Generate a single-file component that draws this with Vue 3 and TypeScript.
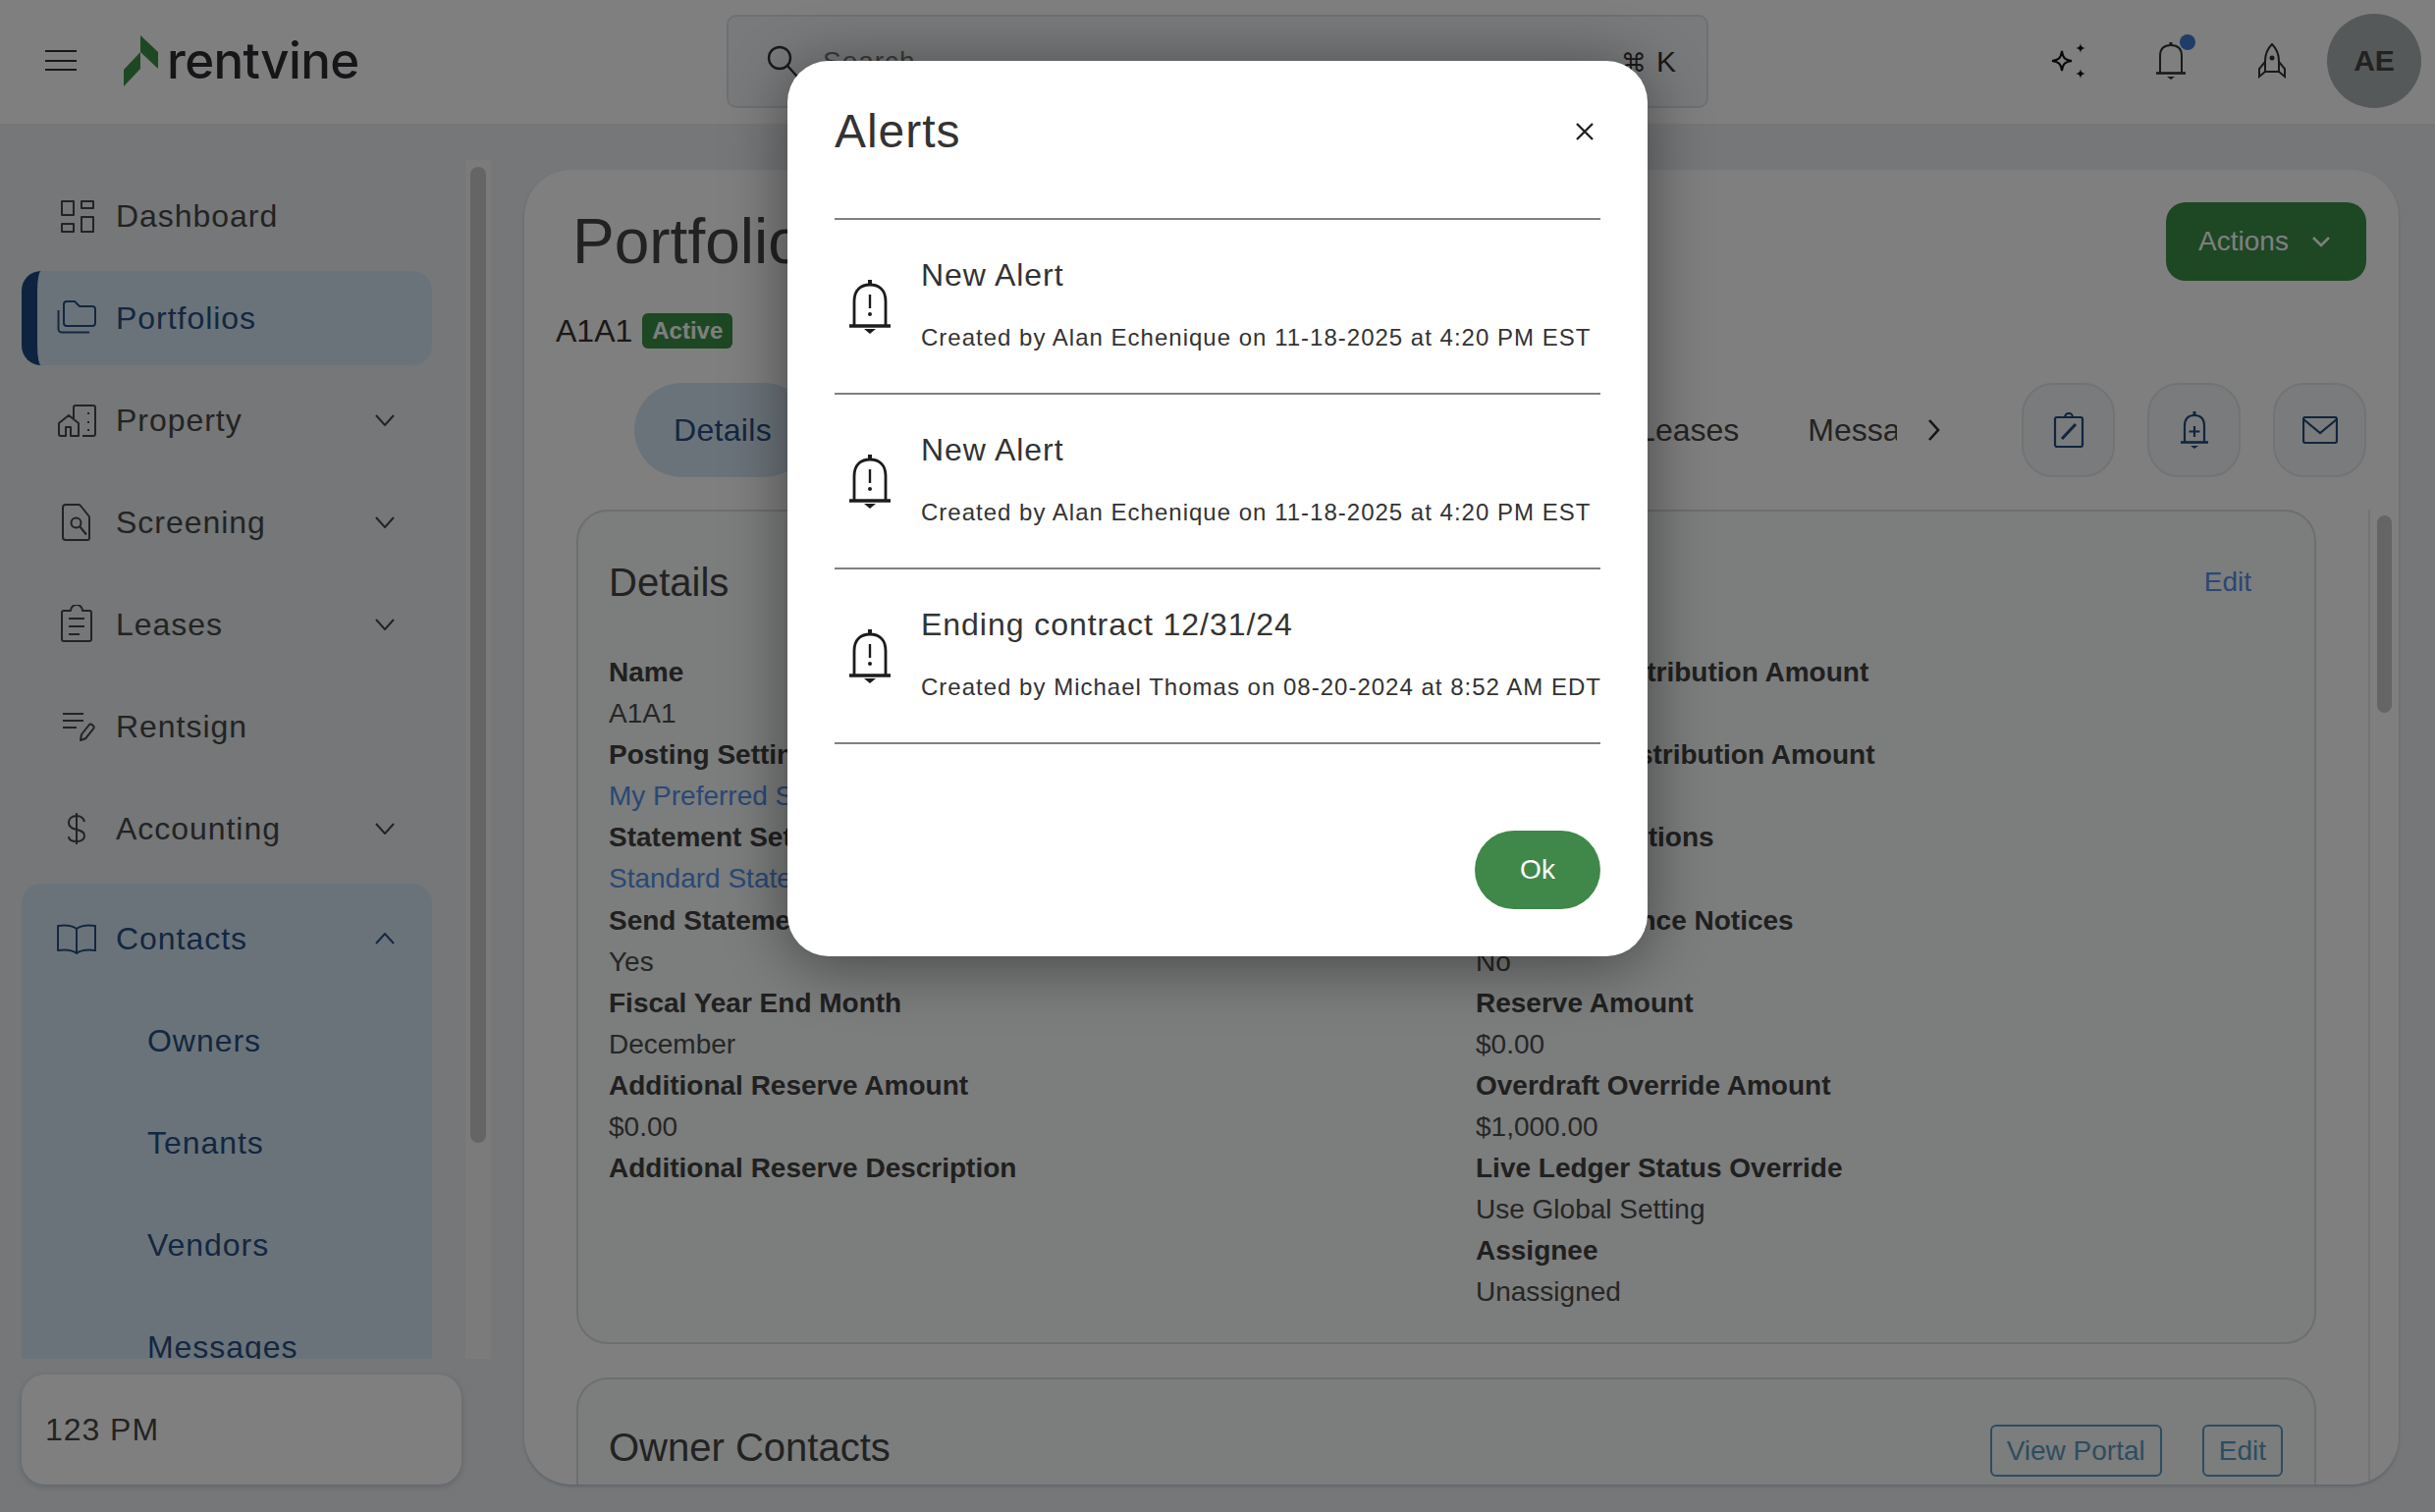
<script setup lang="ts">
interface NavItem {
  label: string;
  paths: string[];
  chevron?: boolean;
  active?: boolean;
}

interface DetailRow {
  label: string;
  value: string;
  link?: boolean;
}

const navItems: NavItem[] = [
  {
    label: "Dashboard",
    paths: ["M5 5h12v14H5z", "M25 5h12v7H25z", "M5 28h12v8H5z", "M25 21h12v15H25z"],
  },
  {
    label: "Portfolios",
    active: true,
    paths: [
      "M7 6a3 3 0 0 1 3-3h8l5 5h13a3 3 0 0 1 3 3v14a3 3 0 0 1-3 3H10a3 3 0 0 1-3-3z",
      "M1.5 12v19a3.5 3.5 0 0 0 3.5 3.5h28",
    ],
  },
  {
    label: "Property",
    chevron: true,
    paths: [
      "M2 34V23l10-8 10 8v13h-8v-9H9v9H4a2 2 0 0 1-2-2z",
      "M17 18V7a2 2 0 0 1 2-2h18a2 2 0 0 1 2 2v27a2 2 0 0 1-2 2H26",
      "M32 12v2M32 21v2M32 29v2",
    ],
  },
  {
    label: "Screening",
    chevron: true,
    paths: [
      "M9 2h13a3 3 0 0 1 2 1l8 10a3 3 0 0 1 1 2v21a2 2 0 0 1-2 2H9a3 3 0 0 1-3-3V5a3 3 0 0 1 3-3z",
      "M24.5 20.5a5 5 0 1 1-10 0a5 5 0 1 1 10 0z",
      "M23.5 24.5l6.5 8",
    ],
  },
  {
    label: "Leases",
    chevron: true,
    paths: [
      "M7 6h7a6 6 0 0 1 12 0h7a2 2 0 0 1 2 2v27a2 2 0 0 1-2 2H7a2 2 0 0 1-2-2V8a2 2 0 0 1 2-2z",
      "M12 14h16M12 22h16M12 30h11",
    ],
  },
  {
    label: "Rentsign",
    paths: ["M6 7h21M6 14h21M6 21h14", "M24 34l1-6 8-10a2 2 0 0 1 3 .5l1 .8a2 2 0 0 1 0 3l-8 10z"],
  },
  {
    label: "Accounting",
    chevron: true,
    paths: ["M28 13c-1-4-4-6-8-6-5 0-8 3-8 7 0 9 16 5 16 13 0 4-3 6-8 6s-8-2-8-5", "M20 4v32"],
  },
];

const contactLinks = ["Owners", "Tenants", "Vendors", "Messages"];

const tabs = ["Properties", "Units", "Transactions", "Contacts", "Leases", "Messages"];

const leftRows: DetailRow[] = [
  { label: "Name", value: "A1A1" },
  { label: "Posting Settings", value: "My Preferred Settings", link: true },
  { label: "Statement Settings", value: "Standard Statement", link: true },
  { label: "Send Statements", value: "Yes" },
  { label: "Fiscal Year End Month", value: "December" },
  { label: "Additional Reserve Amount", value: "$0.00" },
  { label: "Additional Reserve Description", value: "" },
];

const rightRows: DetailRow[] = [
  { label: "Minimum Distribution Amount", value: "$0.00" },
  { label: "Maximum Distribution Amount", value: "$0.00" },
  { label: "Hold Distributions", value: "No" },
  { label: "Email Insurance Notices", value: "No" },
  { label: "Reserve Amount", value: "$0.00" },
  { label: "Overdraft Override Amount", value: "$1,000.00" },
  { label: "Live Ledger Status Override", value: "Use Global Setting" },
  { label: "Assignee", value: "Unassigned" },
];

const alerts = [
  { title: "New Alert", meta: "Created by Alan Echenique on 11-18-2025 at 4:20 PM EST" },
  { title: "New Alert", meta: "Created by Alan Echenique on 11-18-2025 at 4:20 PM EST" },
  { title: "Ending contract 12/31/24", meta: "Created by Michael Thomas on 08-20-2024 at 8:52 AM EDT" },
];
</script>

<template>
  <div class="page">
    <header class="topbar">
      <div class="burger"><span></span><span></span><span></span></div>
      <div class="logo">
        <svg class="logo__mark" width="36" height="52" viewBox="0 0 36 52">
          <path d="M17 0l18 17v17L17 17z" fill="#3d8f48" />
          <path d="M0 35l17-18v17L0 52z" fill="#3d8f48" />
        </svg>
        <span class="logo__text">rentvine</span>
      </div>
      <div class="search">
        <svg width="34" height="34" viewBox="0 0 34 34" fill="none" stroke="#333" stroke-width="2.4">
          <circle cx="14" cy="13" r="11" />
          <path d="M22 21l10 11" stroke-linecap="round" />
        </svg>
        <span class="search__text">Search</span>
        <span class="search__keys"><span class="search__cmd">⌘</span> K</span>
      </div>
      <div class="topbar__icons">
        <svg width="38" height="38" viewBox="0 0 38 38" fill="none" stroke="#111" stroke-width="2">
          <path d="M12 9c1 7 3 9 10 10-7 1-9 3-10 10-1-7-3-9-10-10 7-1 9-3 10-10z" />
          <path d="M31 1c.6 3.400 1.600 4.400 5 5-3.400.6-4.400 1.600-5 5-.6-3.400-1.600-4.400-5-5 3.400-.6 4.400-1.600 5-5z" fill="#111" stroke="none" />
          <path d="M31 27c.6 3.400 1.600 4.400 5 5-3.400.6-4.400 1.600-5 5-.6-3.400-1.600-4.400-5-5 3.400-.6 4.400-1.600 5-5z" fill="#111" stroke="none" />
        </svg>
        <div class="notif">
          <svg width="30" height="38" viewBox="0 0 30 38" fill="none" stroke="#333" stroke-width="2">
            <path d="M4 31V14C4 6 9 3 15 3s11 3 11 11v17" />
            <path d="M0 31.500h30" stroke-width="2.600" />
            <path d="M15 0v3" stroke-width="3" />
            <path d="M11 35h8l-4 3z" fill="#333" stroke="none" />
          </svg>
          <span class="notif__dot"></span>
        </div>
        <svg class="rocket" width="30" height="36" viewBox="0 0 30 36" fill="none" stroke="#333" stroke-width="2">
          <path d="M15 1c5 5 7 11 7 17v11H8V18C8 12 10 6 15 1z" />
          <path d="M8 19l-6 7v8l6-5M22 19l6 7v8l-6-5" />
          <circle cx="15" cy="15" r="2.500" fill="#333" stroke="none" />
        </svg>
        <div class="avatar">AE</div>
      </div>
    </header>

    <div class="body">
      <aside class="sidebar">
        <div class="sidebar__scroll">
          <nav class="nav">
            <div
              v-for="item in navItems"
              :key="item.label"
              class="nav__item"
              :class="{ 'nav__item--active': item.active }"
            >
              <svg class="nav__icon" width="40" height="40" viewBox="0 0 40 40" fill="none" stroke="currentColor" stroke-width="2">
                <path v-for="d in item.paths" :key="d" :d="d" stroke-linejoin="round" />
              </svg>
              <span class="nav__label">{{ item.label }}</span>
              <svg v-if="item.chevron" class="nav__chev" width="20" height="12" viewBox="0 0 20 12" fill="none" stroke="currentColor" stroke-width="2">
                <path d="M1 1l9 10 9-10" />
              </svg>
            </div>
            <div class="nav__group">
              <div class="nav__item nav__item--open">
                <svg class="nav__icon" width="40" height="40" viewBox="0 0 40 40" fill="none" stroke="currentColor" stroke-width="2">
                  <path d="M20 10C16 7 8 6 1 7v25c7-1 15 0 19 3 4-3 12-4 19-3V7c-7-1-15 0-19 3zM20 10v25" stroke-linejoin="round" />
                </svg>
                <span class="nav__label">Contacts</span>
                <svg class="nav__chev" width="20" height="12" viewBox="0 0 20 12" fill="none" stroke="currentColor" stroke-width="2">
                  <path d="M1 11l9-10 9 10" />
                </svg>
              </div>
              <div v-for="link in contactLinks" :key="link" class="nav__sub">{{ link }}</div>
            </div>
          </nav>
          <div class="sidebar__track"><div class="sidebar__thumb"></div></div>
        </div>
        <div class="account">123 PM</div>
      </aside>

      <main class="main">
        <div class="main__head">
          <div class="main__top">
            <h1 class="main__title">Portfolios</h1>
            <button class="btn-actions">
              Actions
              <svg width="20" height="12" viewBox="0 0 20 12" fill="none" stroke="currentColor" stroke-width="2.600">
                <path d="M2 2l8 8 8-8" />
              </svg>
            </button>
          </div>
          <div class="main__sub">
            <span class="main__code">A1A1</span>
            <span class="badge">Active</span>
          </div>
          <div class="tabbar">
            <div class="tabs">
              <div class="tab tab--active">Details</div>
              <div v-for="tab in tabs" :key="tab" class="tab">{{ tab }}</div>
            </div>
            <svg class="tabbar__next" width="14" height="24" viewBox="0 0 14 24" fill="none" stroke="#2a2a2a" stroke-width="2.600">
              <path d="M2 2l9 10-9 10" />
            </svg>
            <div class="tool-btn">
              <svg width="32" height="36" viewBox="0 0 32 36" fill="none" stroke="currentColor" stroke-width="2.200">
                <path d="M4 5h24a2 2 0 0 1 2 2v26a2 2 0 0 1-2 2H4a2 2 0 0 1-2-2V7a2 2 0 0 1 2-2z" />
                <path d="M12 5a4 4 0 0 1 8 0" />
                <path d="M9 27L23 12" stroke-width="3" />
              </svg>
            </div>
            <div class="tool-btn">
              <svg width="30" height="38" viewBox="0 0 30 38" fill="none" stroke="currentColor" stroke-width="2.200">
                <path d="M5 31V15C5 7 9 4 15 4s10 3 10 11v16" />
                <path d="M1 31.500h28" stroke-width="2.600" />
                <path d="M15 0v4" stroke-width="3" />
                <path d="M15 15v11M9.500 20.500h11" />
                <path d="M11 35h8l-4 3z" fill="currentColor" stroke="none" />
              </svg>
            </div>
            <div class="tool-btn">
              <svg width="36" height="28" viewBox="0 0 36 28" fill="none" stroke="currentColor" stroke-width="2.200">
                <rect x="1" y="1" width="34" height="26" rx="2" />
                <path d="M1 3l17 14L35 3" />
              </svg>
            </div>
          </div>
        </div>

        <div class="main__scroll">
          <div class="main__content">
            <section class="panel">
              <div class="panel__head">
                <h2 class="panel__title">Details</h2>
                <span class="panel__link">Edit</span>
              </div>
              <div class="fields">
                <div class="fields__col">
                  <template v-for="row in leftRows" :key="row.label">
                    <div class="fields__label">{{ row.label }}</div>
                    <div v-if="row.value" class="fields__value" :class="{ 'fields__value--link': row.link }">{{ row.value }}</div>
                  </template>
                </div>
                <div class="fields__col">
                  <template v-for="row in rightRows" :key="row.label">
                    <div class="fields__label">{{ row.label }}</div>
                    <div class="fields__value">{{ row.value }}</div>
                  </template>
                </div>
              </div>
            </section>
            <section class="panel panel--contacts">
              <div class="panel__head panel__head--contacts">
                <h2 class="panel__title">Owner Contacts</h2>
                <div class="panel__btns">
                  <button class="btn-outline">View Portal</button>
                  <button class="btn-outline">Edit</button>
                </div>
              </div>
            </section>
          </div>
          <div class="main__track"><div class="main__thumb"></div></div>
        </div>
      </main>
    </div>

    <div class="overlay">
      <div class="modal">
        <div class="modal__head">
          <h3 class="modal__title">Alerts</h3>
          <svg class="modal__close" width="20" height="20" viewBox="0 0 20 20" fill="none" stroke="#222" stroke-width="2.400">
            <path d="M2 2l16 16M18 2L2 18" />
          </svg>
        </div>
        <div class="alerts">
          <div v-for="(alert, i) in alerts" :key="i" class="alert">
            <svg class="alert__icon" width="42" height="55" viewBox="0 0 42 55" fill="none" stroke="#1c1c1c" stroke-width="2.800">
              <path d="M5 46V22C5 10 12 5 21 5s16 5 16 17v24" />
              <path d="M0 47h42" stroke-width="3.600" />
              <path d="M21 0v6" stroke-width="4" />
              <path d="M21 15v14" stroke-width="2.400" />
              <circle cx="21" cy="35" r="2" fill="#1c1c1c" stroke="none" />
              <path d="M15 50h12l-6 5z" fill="#1c1c1c" stroke="none" />
            </svg>
            <div class="alert__text">
              <div class="alert__title">{{ alert.title }}</div>
              <div class="alert__meta">{{ alert.meta }}</div>
            </div>
          </div>
        </div>
        <div class="modal__foot">
          <button class="btn-ok">Ok</button>
        </div>
      </div>
    </div>
  </div>
</template>

<style>
html,
body {
  margin: 0;
  background: #eaeef2;
}
</style>

<style scoped>
.page {
  position: relative;
  width: 2480px;
  height: 1540px;
  overflow: hidden;
  display: flex;
  flex-direction: column;
  background: #eaeef2;
  color: #474747;
  font-family: "Liberation Sans", Arial, sans-serif;
  font-size: 32px;
  letter-spacing: 0.03em;
}

button {
  font-family: inherit;
  letter-spacing: inherit;
  cursor: pointer;
}

h1,
h2,
h3 {
  margin: 0;
  font-weight: 400;
}

/* top bar */
.topbar {
  flex: 0 0 126px;
  display: flex;
  align-items: center;
  background: #fff;
  padding: 0 14px 0 46px;
  box-sizing: border-box;
}

.burger {
  width: 32px;
  height: 21px;
  margin-top: -3px;
  display: flex;
  flex-direction: column;
  justify-content: space-between;
}

.burger span {
  height: 2px;
  background: #333;
}

.logo {
  flex: none;
  display: flex;
  align-items: center;
  gap: 8px;
  margin: -3px 0 0 48px;
  width: 236px;
}

.logo__mark {
  flex: none;
}

.logo__text {
  flex: none;
  font-family: Inter, sans-serif;
  font-size: 51px;
  font-weight: 500;
  letter-spacing: -0.012em;
  color: #2c2d30;
  line-height: 60px;
}

.search {
  flex: none;
  width: 1000px;
  height: 95px;
  margin: -1px 0 0 378px;
  box-sizing: border-box;
  display: flex;
  align-items: center;
  padding: 0 30px 0 38px;
  background: #f3f5f7;
  border: 2px solid #dde1e6;
  border-radius: 10px;
  color: #555;
}

.search__text {
  margin-left: 24px;
  color: #777;
  font-size: 28px;
  flex: 1;
}

.search__keys {
  color: #333;
  font-size: 30px;
}

.search__cmd {
  font-family: "DejaVu Sans", sans-serif;
  font-size: 26px;
}

.topbar__icons {
  margin: -2px 0 0 auto;
  display: flex;
  align-items: center;
  gap: 70px;
}

.notif {
  position: relative;
  display: flex;
}

.notif__dot {
  position: absolute;
  top: -8px;
  right: -10px;
  width: 16px;
  height: 16px;
  border-radius: 50%;
  background: #3e7bd0;
}

.rocket {
  margin-left: 3px;
}

.avatar {
  width: 96px;
  height: 96px;
  margin-left: -29px;
  border-radius: 50%;
  background: #acb2b2;
  display: flex;
  align-items: center;
  justify-content: center;
  font-weight: 700;
  font-size: 30px;
  letter-spacing: 0;
  color: #444;
}

/* body */
.body {
  flex: 1;
  min-height: 0;
  display: flex;
}

.sidebar {
  flex: 0 0 534px;
  box-sizing: border-box;
  padding: 37px 0 28px 22px;
  display: flex;
  flex-direction: column;
  gap: 16px;
}

.sidebar__scroll {
  flex: 1;
  min-height: 0;
  display: flex;
  overflow: hidden;
}

.nav {
  width: 418px;
  overflow: hidden;
  padding-top: 9px;
  box-sizing: border-box;
  display: flex;
  flex-direction: column;
  gap: 8px;
}

.nav__item {
  flex: 0 0 96px;
  display: flex;
  align-items: center;
  padding: 0 38px 0 36px;
  box-sizing: border-box;
  border-radius: 20px;
}

.nav__item--active {
  background: #d7e7f5;
  border-left: 16px solid #1a4680;
  padding-left: 20px;
  color: #274e82;
}

.nav__item--open {
  color: #274e82;
}

.nav__label {
  margin-left: 20px;
  flex: 1;
}

.nav__chev {
  flex: none;
}

.nav__group {
  background: #d7e7f5;
  border-radius: 20px 20px 0 0;
  padding-top: 8px;
  display: flex;
  flex-direction: column;
  gap: 8px;
}

.nav__sub {
  flex: 0 0 96px;
  display: flex;
  align-items: center;
  padding-left: 128px;
  color: #274e82;
}

.sidebar__track {
  width: 26px;
  margin-left: 34px;
  background: #f6f6f6;
  padding: 7px 5px 0;
  box-sizing: border-box;
}

.sidebar__thumb {
  height: 994px;
  background: #cbcbcb;
  border-radius: 8px;
}

.account {
  flex: 0 0 112px;
  width: 448px;
  box-sizing: border-box;
  display: flex;
  align-items: center;
  padding-left: 24px;
  background: #fff;
  border-radius: 24px;
  box-shadow: 0 2px 6px rgba(70, 90, 110, 0.25);
}

/* main card */
.main {
  width: 1909px;
  box-sizing: border-box;
  margin: 47px 0 28px;
  display: flex;
  flex-direction: column;
  background: #fff;
  border-radius: 48px;
  box-shadow: 0 2px 3px rgba(70, 90, 110, 0.25);
  overflow: hidden;
}

.main__head {
  padding: 33px 33px 0 32px;
}

.main__top {
  display: flex;
  justify-content: space-between;
  align-items: center;
  height: 80px;
}

.main__title {
  padding-left: 17px;
  font-size: 64px;
  letter-spacing: 0;
  color: #444;
}

.btn-actions {
  width: 204px;
  height: 80px;
  display: flex;
  align-items: center;
  justify-content: center;
  gap: 23px;
  padding: 0 3px 0 0;
  border: none;
  border-radius: 20px;
  background: #3d8f48;
  color: #fff;
  font-size: 28px;
  letter-spacing: 0;
}

.main__sub {
  margin-top: 33px;
  display: flex;
  align-items: center;
  gap: 10px;
  height: 36px;
}

.main__code {
  color: #333;
  letter-spacing: 0;
}

.badge {
  width: 92px;
  height: 36px;
  border-radius: 6px;
  background: #3d8f48;
  color: #fff;
  font-weight: 700;
  font-size: 24px;
  letter-spacing: 0;
  display: flex;
  align-items: center;
  justify-content: center;
}

.tabbar {
  margin-top: 35px;
  padding-left: 80px;
  display: flex;
  align-items: center;
  height: 96px;
}

.tabs {
  width: 1286px;
  display: flex;
  overflow: hidden;
}

.tab {
  flex: none;
  height: 96px;
  display: flex;
  align-items: center;
  padding: 0 35px;
  letter-spacing: 0;
}

.tab--active {
  padding: 0 40px;
  border-radius: 48px;
  background: #d7e7f5;
  color: #274e82;
  letter-spacing: 0.01em;
}

.tabbar__next {
  margin-left: 31px;
}

.tool-btn {
  width: 95px;
  height: 96px;
  margin-left: 33px;
  box-sizing: border-box;
  display: flex;
  align-items: center;
  justify-content: center;
  border: 2px solid #e3e7ea;
  border-radius: 32px;
  background: #f4f6f8;
  color: #234a7c;
}

.tabbar__next + .tool-btn {
  margin-left: 82px;
}

.main__scroll {
  flex: 1;
  min-height: 0;
  margin-top: 33px;
  display: flex;
  overflow: hidden;
}

.main__content {
  flex: 1;
  min-width: 0;
  padding: 0 53px;
  display: flex;
  flex-direction: column;
  gap: 34px;
}

.main__track {
  flex: 0 0 31px;
  box-sizing: border-box;
  border-left: 2px solid #e6e8ea;
  padding: 6px 7px 0;
}

.main__thumb {
  height: 201px;
  background: #cbcbcb;
  border-radius: 8px;
}

.panel {
  box-sizing: border-box;
  height: 850px;
  flex: none;
  padding: 48px 64px 0 31px;
  background: #f9fafb;
  border: 2px solid #dadde0;
  border-radius: 32px;
}

.panel--contacts {
  height: 180px;
  padding: 46px 32px 0 31px;
  border-bottom: none;
  border-radius: 32px 32px 0 0;
}

.panel__head {
  display: flex;
  justify-content: space-between;
  align-items: center;
  height: 48px;
}

.panel__head--contacts {
  height: 54px;
  align-items: flex-start;
}

.panel__title {
  font-size: 40px;
  line-height: 48px;
  letter-spacing: 0;
  color: #444;
}

.panel__head--contacts .panel__title {
  line-height: 46px;
}

.panel__link {
  font-size: 28px;
  letter-spacing: 0;
  color: #5590e8;
}

.fields {
  margin-top: 47px;
  display: grid;
  grid-template-columns: 883px 1fr;
}

.fields__label {
  font-size: 28px;
  line-height: 42.100px;
  font-weight: 700;
  color: #404040;
  letter-spacing: 0;
}

.fields__value {
  font-size: 28px;
  line-height: 42.100px;
  color: #4c4c4c;
  letter-spacing: 0;
}

.fields__value--link {
  color: #5590e8;
}

.panel__btns {
  display: flex;
  gap: 41px;
}

.btn-outline {
  height: 53px;
  padding: 0 15px;
  background: transparent;
  border: 2px solid #5a9ac0;
  border-radius: 6px;
  color: #5a9ac0;
  font-size: 28px;
  letter-spacing: 0;
}

/* modal */
.overlay {
  position: absolute;
  inset: 0;
  display: flex;
  justify-content: center;
  align-items: flex-start;
  padding-top: 62px;
  box-sizing: border-box;
  background: rgba(0, 0, 0, 0.5);
}

.modal {
  width: 876px;
  height: 912px;
  box-sizing: border-box;
  padding: 0 48px;
  display: flex;
  flex-direction: column;
  background: #fff;
  border-radius: 42px;
  box-shadow: 0 8px 64px rgba(0, 0, 0, 0.45);
}

.modal__head {
  flex: 0 0 160px;
  display: flex;
  justify-content: space-between;
  align-items: flex-start;
  padding-top: 44px;
  box-sizing: border-box;
}

.modal__title {
  font-size: 48px;
  line-height: 56px;
  letter-spacing: 0.02em;
  color: #333;
}

.modal__close {
  margin: 18px 6px 0 0;
}

.alerts {
  border-top: 2px solid #808080;
}

.alert {
  height: 178px;
  box-sizing: border-box;
  display: flex;
  align-items: center;
  gap: 31px;
  padding-left: 15px;
  border-bottom: 2px solid #808080;
}

.alert__icon {
  flex: none;
}

.alert__text {
  white-space: nowrap;
  padding-bottom: 5px;
}

.alert__title {
  font-size: 32px;
  line-height: 48px;
  color: #333;
}

.alert__meta {
  margin-top: 20px;
  font-size: 24px;
  line-height: 40px;
  color: #333;
  letter-spacing: 0.042em;
}

.modal__foot {
  margin-top: auto;
  padding-bottom: 48px;
  display: flex;
  justify-content: flex-end;
}

.btn-ok {
  width: 128px;
  height: 80px;
  border: none;
  border-radius: 40px;
  background: #3f8849;
  color: #fff;
  font-size: 28px;
  letter-spacing: 0;
}
</style>
